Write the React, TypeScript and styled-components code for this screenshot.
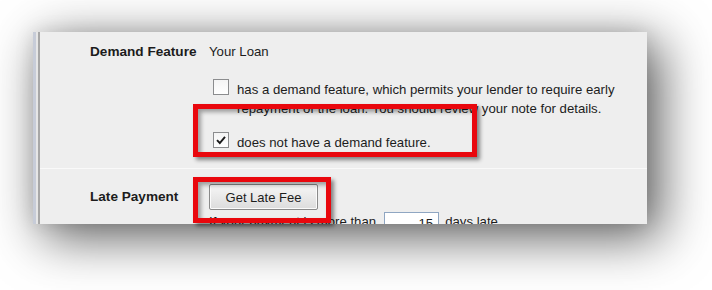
import React from "react";
import styled, { createGlobalStyle } from "styled-components";

const GlobalStyle = createGlobalStyle`
  html, body {
    margin: 0;
    padding: 0;
    background: #ffffff;
  }
  body {
    font-family: "Liberation Sans", Arial, sans-serif;
    color: #1c1c1c;
  }
`;

const Stage = styled.div`
  position: relative;
  width: 712px;
  height: 290px;
  padding: 32px 0 0 33px;
  box-sizing: border-box;
  overflow: hidden;
`;

const Panel = styled.div`
  display: flex;
  width: 614px;
  height: 192px;
  background: #eeeeee;
  overflow: hidden;
  box-shadow: 12px 12px 48px 2px rgba(0, 0, 0, 0.62),
    0 0 18px rgba(0, 0, 0, 0.1);
`;

const Rail = styled.div`
  flex: none;
  width: 2px;
  background: #e6e6e6;
  border-left: 3px solid #c7ccd8;
  border-right: 2px solid #a7a7a7;
`;

const Content = styled.div`
  flex: 1;
  display: flex;
  flex-direction: column;
`;

const Section = styled.div<{ $top: number; $bottom: number }>`
  display: grid;
  grid-template-columns: 119px 1fr;
  padding: ${(p) => p.$top}px 0 ${(p) => p.$bottom}px 50px;
`;

const Label = styled.div<{ $pad?: number }>`
  font-size: 13.6px;
  font-weight: bold;
  line-height: 16px;
  padding-top: ${(p) => p.$pad ?? 0}px;
  white-space: nowrap;
`;

const Value = styled.div`
  display: flex;
  flex-direction: column;
  font-size: 13.2px;
  line-height: 16px;
`;

const Options = styled.div`
  display: flex;
  flex-direction: column;
  gap: 15px;
  margin-top: 20px;
  padding-left: 4px;
`;

const Option = styled.label`
  display: flex;
  align-items: flex-start;
  gap: 8px;
  line-height: 19px;
`;

const Box = styled.span`
  flex: none;
  width: 14px;
  height: 14px;
  margin-top: -1px;
  border: 1px solid #8b8c8e;
  background: linear-gradient(#f4f4f4, #ffffff);
  display: flex;
  align-items: center;
  justify-content: center;
`;

const OptionText = styled.span`
  max-width: 400px;
`;

const Divider = styled.div`
  height: 1px;
  background: #d0d0d0;
  border-bottom: 1px solid #f9f9f9;
`;

const ButtonRow = styled.div`
  display: flex;
  align-items: center;
`;

const Button = styled.button`
  width: 109px;
  height: 26px;
  padding: 0;
  font-family: "Liberation Sans", Arial, sans-serif;
  font-size: 13px;
  color: #1c1c1c;
  border: 1px solid #8a8a8a;
  border-radius: 2px;
  background: linear-gradient(#f6f6f6, #dcdcdc);
  box-shadow: inset 0 0 0 1px #fbfbfb;
`;

const FeeRow = styled.div`
  display: flex;
  align-items: flex-start;
  margin-top: 2px;
  line-height: 19px;
  white-space: nowrap;
`;

const DaysInput = styled.div`
  width: 55px;
  height: 19px;
  margin: 0 6px 0 8px;
  padding-right: 5px;
  box-sizing: border-box;
  border: 1px solid #8fa6c2;
  background: #ffffff;
  text-align: right;
  line-height: 22px;
`;

const Callout = styled.div<{ $x: number; $y: number; $w: number; $h: number }>`
  position: absolute;
  left: ${(p) => p.$x}px;
  top: ${(p) => p.$y}px;
  width: ${(p) => p.$w}px;
  height: ${(p) => p.$h}px;
  box-sizing: border-box;
  border: 5px solid #e9070d;
  box-shadow: 3px 3px 4px rgba(0, 0, 0, 0.45),
    inset 3px 3px 4px rgba(0, 0, 0, 0.35);
  pointer-events: none;
`;

const Check = ({ checked }: { checked?: boolean }) => (
  <Box>
    {checked && (
      <svg width="12" height="12" viewBox="0 0 12 12">
        <path
          d="M2 6.2 L4.8 9 L10 2.8"
          fill="none"
          stroke="#1a1a1a"
          strokeWidth="1.9"
        />
      </svg>
    )}
  </Box>
);

export default function App() {
  return (
    <Stage>
      <GlobalStyle />
      <Panel>
        <Rail />
        <Content>
          <Section $top={12} $bottom={16}>
            <Label>Demand Feature</Label>
            <Value>
              <span>Your Loan</span>
              <Options>
                <Option>
                  <Check />
                  <OptionText>
                    has a demand feature, which permits your lender to require
                    early repayment of the loan. You should review your note
                    for details.
                  </OptionText>
                </Option>
                <Option>
                  <Check checked />
                  <OptionText>does not have a demand feature.</OptionText>
                </Option>
              </Options>
            </Value>
          </Section>
          <Divider />
          <Section $top={15} $bottom={0}>
            <Label $pad={5}>Late Payment</Label>
            <Value>
              <ButtonRow>
                <Button>Get Late Fee</Button>
              </ButtonRow>
              <FeeRow>
                If your payment is more than
                <DaysInput>15</DaysInput>
                days late.
              </FeeRow>
            </Value>
          </Section>
        </Content>
      </Panel>
      <Callout $x={193} $y={104} $w={284} $h={53} />
      <Callout $x={193} $y={177} $w={138} $h={46} />
    </Stage>
  );
}
